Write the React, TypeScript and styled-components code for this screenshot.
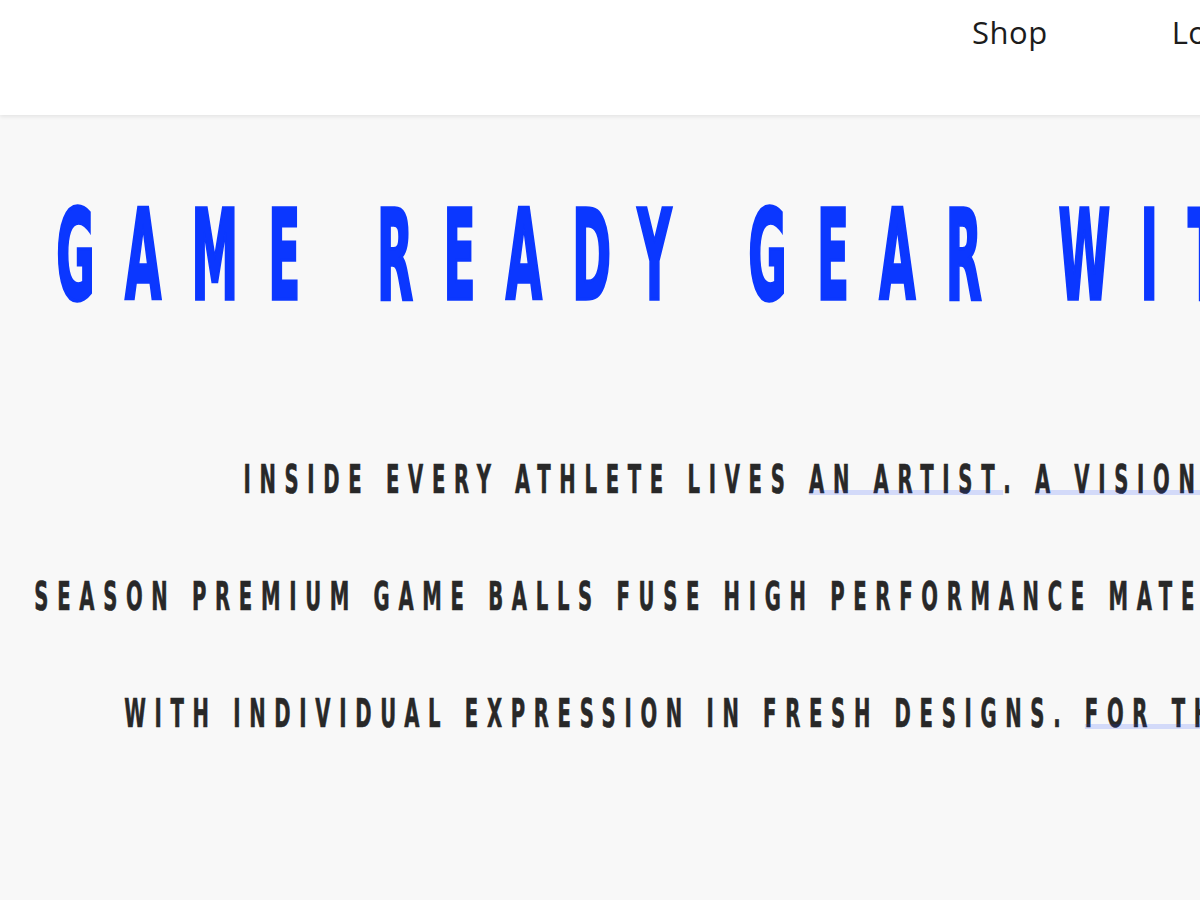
import styled, { createGlobalStyle } from 'styled-components'

const GlobalStyle = createGlobalStyle`
  html, body {
    margin: 0;
    padding: 0;
    background: #f8f8f8;
    overflow: hidden;
  }
`

const Page = styled.div`
  width: 1920px;
  min-height: 900px;
  background: #f8f8f8;
`

const Header = styled.header`
  position: relative;
  z-index: 1;
  height: 115px;
  background: #fff;
  box-shadow: 0 2px 4px rgba(0, 0, 0, 0.08);
`

const Nav = styled.nav`
  display: flex;
  gap: 124px;
  padding: 17px 0 0 972px;
`

const NavLink = styled.a`
  font-family: 'Open Sans', sans-serif;
  font-size: 31px;
  line-height: 1;
  letter-spacing: 0.5px;
  color: #1c1c1c;
  text-decoration: none;
`

const Hero = styled.section`
  display: flex;
  flex-direction: column;
  align-items: center;
  padding-top: 79px;
`

const condensed = `'DejaVu Sans Condensed', 'DejaVu Sans', sans-serif`

// the reference face is a tall condensed display font, so the sans is squeezed
const Title = styled.h1`
  margin: 0;
  width: max-content;
  white-space: nowrap;
  font-family: ${condensed};
  font-weight: 700;
  font-size: 124px;
  line-height: 1;
  letter-spacing: 72px;
  color: #0b37ff;
  -webkit-text-stroke: 3.5px #0b37ff;
  transform: scaleX(0.42);
`

const Copy = styled.p`
  margin: 103px 0 0;
  width: max-content;
  white-space: nowrap;
  text-align: center;
  font-family: ${condensed};
  font-weight: 700;
  font-size: 39px;
  line-height: 117px;
  letter-spacing: 15.5px;
  color: #282828;
  -webkit-text-stroke: 0.6px #282828;
  transform: scaleX(0.56);
`

const Mark = styled.span`
  position: relative;

  &::after {
    content: '';
    position: absolute;
    left: 0;
    right: 0;
    bottom: 7px;
    height: 5px;
    background: rgba(20, 60, 255, 0.16);
  }
`

const App = () => {
  const links = ['Shop', 'Login', 'Cart']

  return (
    <Page>
      <GlobalStyle />
      <Header>
        <Nav>
          {links.map((l) => (
            <NavLink key={l} href="#">
              {l}
            </NavLink>
          ))}
        </Nav>
      </Header>
      <Hero>
        <Title>GAME READY GEAR WITH ATTITUDE</Title>
        <Copy>
          INSIDE EVERY ATHLETE LIVES <Mark>AN ARTIST</Mark>. <Mark>A VISIONARY</Mark>. A PERFORMER. THIS
          <br />
          SEASON PREMIUM GAME BALLS FUSE HIGH PERFORMANCE MATERIALS AND SKILLED CRAFTSMANSHIP
          <br />
          WITH INDIVIDUAL EXPRESSION IN FRESH DESIGNS. <Mark>FOR THOSE WHO PLAY WITH PURPOSE</Mark>.
        </Copy>
      </Hero>
    </Page>
  )
}

export default App
